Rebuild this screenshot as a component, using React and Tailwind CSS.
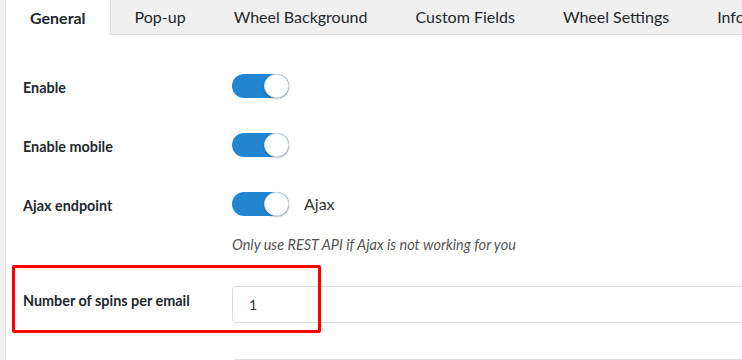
import React from 'react'

const TABS = ['General', 'Pop-up', 'Wheel Background', 'Custom Fields', 'Wheel Settings', 'Info']

function Toggle() {
  return (
    <div className="relative w-[57px] h-[24px] rounded-full bg-[#2185d0]">
      <div className="absolute right-0 top-0 w-[25px] h-[24px] rounded-full bg-white border border-[#dedede] shadow-[0_1px_2px_rgba(0,0,0,0.25)]" />
    </div>
  )
}

function Row({ label, children }) {
  return (
    <div className="flex items-center h-[59px]">
      <div className="w-[226px] pl-[17px] pt-[4px] text-[14.4px] font-bold text-[#23282d]">{label}</div>
      <div className="flex items-center gap-[15px]">{children}</div>
    </div>
  )
}

export default function App() {
  return (
    <div className="relative w-[742px] h-[360px] overflow-hidden bg-white flex font-['Lato','Liberation_Sans',sans-serif]">
      <div className="w-[6px] bg-[#f1f1f1] border-r border-[#e2e2e2] shrink-0" />

      <div className="flex-1 flex flex-col min-w-0">
        {/* Tabs */}
        <div className="flex h-[35px] bg-[#f0f0f0] border-b border-[#dcdcdc] shrink-0">
          {TABS.map((t, i) => (
            <div
              key={t}
              className={`px-6 flex items-center whitespace-nowrap text-[16px] text-[#23282d] ${
                i === 0 ? 'bg-white font-bold border-r border-[#dcdcdc] -mb-px h-[35px]' : 'h-[34px]'
              }`}
            >
              {t}
            </div>
          ))}
        </div>

        <div className="pt-[21px]">
          <Row label="Enable"><Toggle /></Row>
          <Row label="Enable mobile"><Toggle /></Row>
          <Row label="Ajax endpoint">
            <Toggle />
            <span className="text-[16px] text-[#333]">Ajax</span>
          </Row>
          <p className="pl-[226px] mt-[1px] text-[14.5px] italic text-[#555]">Only use REST API if Ajax is not working for you</p>

          <div className="flex items-center mt-[30px]">
            <div className="w-[226px] pl-[17px] text-[14.4px] font-bold text-[#23282d] -mt-[6px]">Number of spins per email</div>
            <div className="flex-1 h-[37px] border border-[#dcdcdc] rounded-[4px] -mr-2 flex items-center pl-4 text-[14px] text-[#32373c]">1</div>
          </div>
          <div className="ml-[226px] mt-[36px] h-[38px] border border-[#dcdcdc] rounded-[4px] -mr-2" />
        </div>
      </div>

      {/* annotation box */}
      <div className="absolute left-[12px] top-[265px] w-[309px] h-[68px] border-[3px] border-[#ff0000] rounded-[2px]" />
    </div>
  )
}
